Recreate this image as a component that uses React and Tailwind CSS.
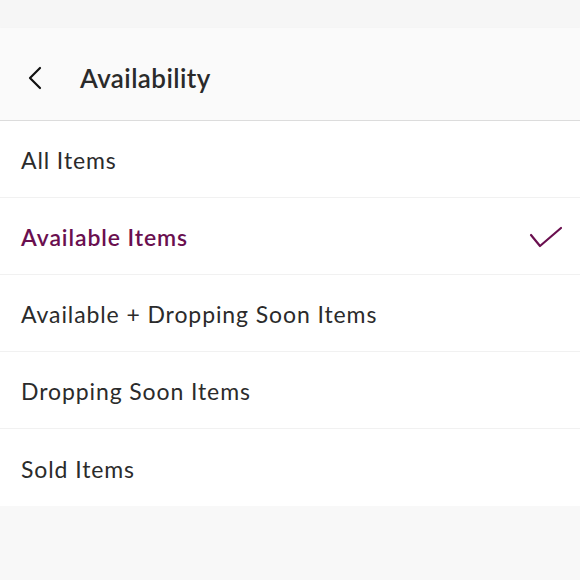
import React, { useState } from 'react';

const options = [
    'All Items',
    'Available Items',
    'Available + Dropping Soon Items',
    'Dropping Soon Items',
    'Sold Items',
];

const App = () => {
    const [selected, setSelected] = useState('Available Items');

    return (
        <div className="w-[580px] h-[580px] bg-[#f8f8f8] flex flex-col text-[#2b2b2b]" style={{ fontFamily: 'Lato, "Open Sans", sans-serif' }}>
            {/* Status bar strip */}
            <div className="h-[28px] bg-[#f6f6f6]" />

            {/* Header */}
            <header className="h-[93px] pt-[8px] bg-[#fafafa] border-b border-[#dcdcdc] shadow-[0_1px_2px_rgba(0,0,0,0.06)] flex items-center">
                <button className="w-[72px] h-full flex items-center pl-[27px]">
                    <svg width="16" height="24" viewBox="0 0 16 24" fill="none" stroke="#111" strokeWidth="2.2" strokeLinecap="round" strokeLinejoin="round">
                        <path d="M13 2 L3 12 L13 22" />
                    </svg>
                </button>
                <h1 className="ml-[8px] text-[26px] font-semibold tracking-[0.4px] text-[#2a2a2a]">Availability</h1>
            </header>

            {/* Options */}
            <ul className="bg-white">
                {options.map((opt, i) => {
                    const active = opt === selected;
                    return (
                        <li
                            key={opt}
                            onClick={() => setSelected(opt)}
                            className={`h-[77px] pt-[3px] flex items-center justify-between pl-[21px] pr-[16px] ${i < options.length - 1 ? 'border-b border-[#f1f1f1]' : ''}`}
                        >
                            <span className={`text-[23px] tracking-[0.9px] ${active ? 'text-[#6a0f4f] font-semibold' : 'text-[#2b2b2b] font-normal'}`}>{opt}</span>
                            {active && (
                                <svg width="36" height="24" viewBox="0 0 36 24" fill="none" stroke="#6a0f4f" strokeWidth="2.2" strokeLinecap="round" strokeLinejoin="round">
                                    <path d="M3 9 L12 20 L33 2" />
                                </svg>
                            )}
                        </li>
                    );
                })}
            </ul>
        </div>
    );
};

export default App;
